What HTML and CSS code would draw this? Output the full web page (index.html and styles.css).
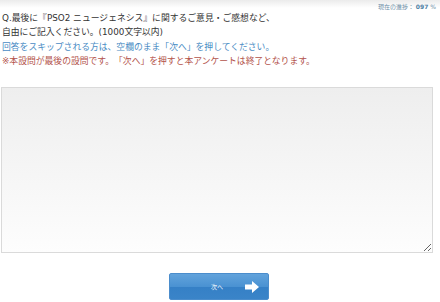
FILE: index.html
```html
<!DOCTYPE html>
<html lang="ja">
<head>
    <meta charset="UTF-8">
    <meta name="viewport" content="width=device-width, initial-scale=1.0">
    <title>アンケート</title>
    <link rel="stylesheet" href="styles.css">
</head>
<body>
    <div class="progress">現在の進捗： <b>097</b> %</div>

    <div class="question">
        <p>Q.最後に『PSO2 ニュージェネシス』に関するご意見・ご感想など、<br>自由にご記入ください。(1000文字以内)</p>
        <p class="note">回答をスキップされる方は、空欄のまま「次へ」を押してください。</p>
        <p class="warn">※本設問が最後の設問です。「次へ」を押すと本アンケートは終了となります。</p>
    </div>

    <div class="answer">
        <textarea id="answer"></textarea>
    </div>

    <div class="actions">
        <button class="next">
            <span>次へ</span>
            <svg width="14" height="12" viewBox="0 0 14 12"><path d="M0 3.5h7V0l7 6-7 6V8.5H0z" fill="#fff"/></svg>
        </button>
    </div>
</body>
</html>
```

FILE: styles.css
```css
body {
    margin: 0;
    font-family: "DejaVu Sans", "Noto Sans CJK JP", sans-serif;
    color: #333;
    background-color: white;
}
.progress {
    height: 11px;
    line-height: 14px;
    padding-right: 4px;
    text-align: right;
    font-size: 6px;
    color: #6f8fa8;
    background: linear-gradient(#ebebeb, #fff 8px);
}
.progress b {
    color: #4f7fa4;
}
.question {
    padding-left: 2px;
    font-size: 8.8px;
    line-height: 14.3px;
    text-spacing-trim: space-all;
}
.question p {
    margin: 0;
}
.note {
    color: #4a8cc4;
}
.warn {
    color: #b3534b;
}
.answer {
    margin-top: 19px;
    padding-left: 1px;
}
textarea {
    display: block;
    width: 432px;
    height: 166px;
    box-sizing: border-box;
    margin: 0;
    border: 1px solid #dadada;
    background: linear-gradient(#eeeeee, #fdfdfd);
}
.actions {
    margin-top: 20px;
    display: flex;
    justify-content: center;
    padding-right: 2px;
}
.next {
    width: 100px;
    height: 27px;
    display: flex;
    align-items: center;
    justify-content: flex-end;
    gap: 22px;
    padding: 0 9px 0 0;
    border: 1px solid #4b8dcc;
    border-radius: 2px;
    background: linear-gradient(#62a3dc, #4a92d2 50%, #3580c6 50%, #3a84c8);
    color: white;
    font-family: "Noto Sans CJK JP", sans-serif;
    font-size: 6px;
    cursor: pointer;
}
```
